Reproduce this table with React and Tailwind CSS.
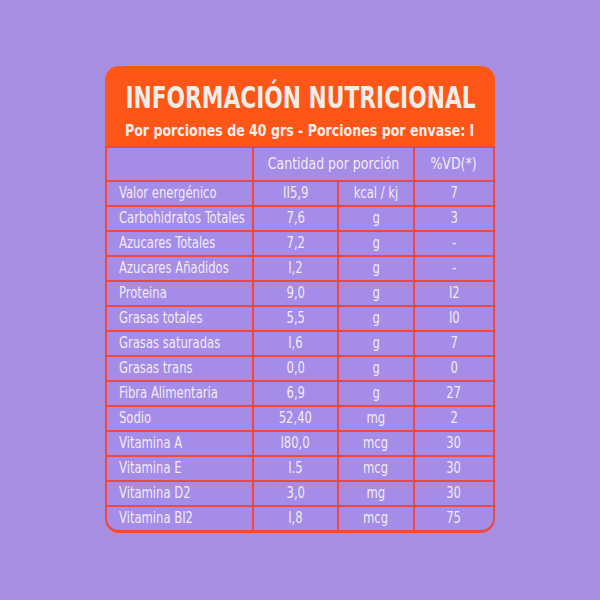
const rows = [
  ['Valor energénico', 'II5,9', 'kcal / kj', '7'],
  ['Carbohidratos Totales', '7,6', 'g', '3'],
  ['Azucares Totales', '7,2', 'g', '-'],
  ['Azucares Añadidos', 'I,2', 'g', '-'],
  ['Proteina', '9,0', 'g', 'I2'],
  ['Grasas totales', '5,5', 'g', 'I0'],
  ['Grasas saturadas', 'I,6', 'g', '7'],
  ['Grasas trans', '0,0', 'g', '0'],
  ['Fibra Alimentaria', '6,9', 'g', '27'],
  ['Sodio', '52,40', 'mg', '2'],
  ['Vitamina A', 'I80,0', 'mcg', '30'],
  ['Vitamina E', 'I.5', 'mcg', '30'],
  ['Vitamina D2', '3,0', 'mg', '30'],
  ['Vitamina BI2', 'I,8', 'mcg', '75'],
];

export default function App() {
  return (
    <div className="h-[600px] w-[600px] bg-[#a68fe0] pt-[66px] font-['DejaVu_Sans',sans-serif] font-stretch-condensed whitespace-nowrap">
      <div className="mx-auto w-[390px] overflow-hidden rounded-[14px] text-[#f4ede8]">
        <div className="flex h-[80px] flex-col items-center bg-[#fe5518] pt-[14px]">
          <h1 className="inline-block scale-x-[0.78] text-[31px] leading-[34px] font-bold">INFORMACIÓN NUTRICIONAL</h1>
          <p className="mt-[8px] inline-block scale-x-[0.875] text-[16px] leading-[18px] font-bold">
            Por porciones de 40 grs - Porciones por envase: I
          </p>
        </div>
        <div className="grid grid-cols-[145px_85px_76px_80px] rounded-b-[14px] border-x-2 border-b-[3px] border-[#f0483a] bg-[#a58ce9] text-[15px] text-[#f1ebf0]">
          <div className="h-[34px] border-t-2 border-[#f0483a]" />
          <div className="col-span-2 flex h-[34px] items-center justify-center border-t-2 border-l-2 border-[#f0483a] text-[16px]">
            <span className="inline-block scale-x-[0.87]">Cantidad por porción</span>
          </div>
          <div className="flex h-[34px] items-center justify-center border-t-2 border-l-2 border-[#f0483a] text-[16px]">
            <span className="inline-block scale-x-[0.87]">%VD(*)</span>
          </div>
          {rows.map(([label, value, unit, vd]) => (
            <Row key={label} label={label} value={value} unit={unit} vd={vd} />
          ))}
        </div>
      </div>
    </div>
  );
}

function Row({ label, value, unit, vd }) {
  return (
    <>
      <div className="flex h-[25px] items-center border-t-2 border-[#f0483a] pl-[12px]">
        <span className="inline-block origin-left scale-x-[0.86]">{label}</span>
      </div>
      <div className="flex h-[25px] items-center justify-center border-t-2 border-l-2 border-[#f0483a]">
        <span className="inline-block scale-x-[0.86]">{value}</span>
      </div>
      <div className="flex h-[25px] items-center justify-center border-t-2 border-l-2 border-[#f0483a]">
        <span className="inline-block scale-x-[0.86]">{unit}</span>
      </div>
      <div className="flex h-[25px] items-center justify-center border-t-2 border-l-2 border-[#f0483a]">
        <span className="inline-block scale-x-[0.86]">{vd}</span>
      </div>
    </>
  );
}
